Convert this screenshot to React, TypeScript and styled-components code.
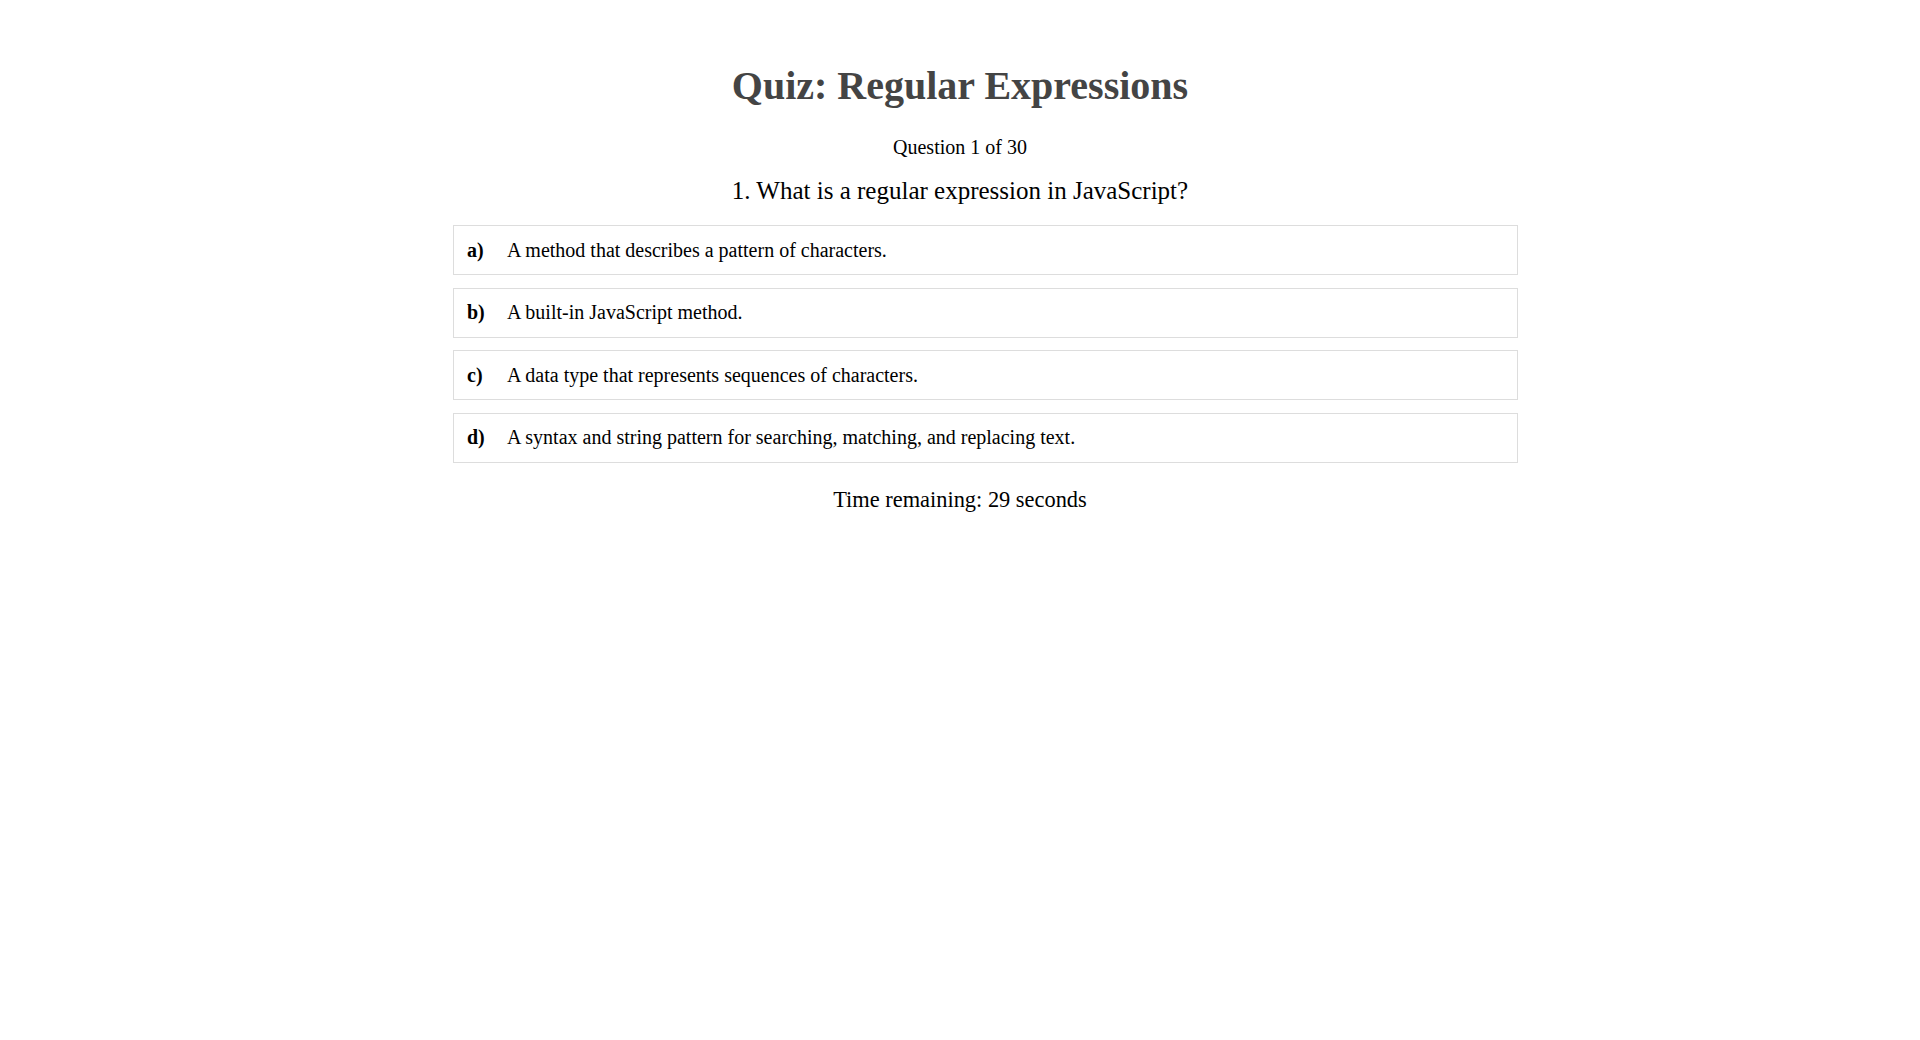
import React from 'react';
import styled, { createGlobalStyle } from 'styled-components';

const GlobalStyle = createGlobalStyle`
  body {
    margin: 8px;
    background: #ffffff;
    font-family: "Liberation Serif", "Times New Roman", serif;
    color: #000000;
  }
`;

const QuizWrapper = styled.main`
  display: flex;
  flex-direction: column;
  align-items: center;
  padding-top: 54px;
`;

const Title = styled.h1`
  margin: 0;
  font-size: 40px;
  font-weight: 700;
  color: #444444;
`;

const Counter = styled.p`
  margin: 27px 0 0;
  font-size: 20px;
`;

const QuestionText = styled.h2`
  margin: 18px 0 20px;
  font-size: 25px;
  font-weight: 400;
`;

const OptionList = styled.ul`
  list-style: none;
  margin: 0;
  padding: 0;
  width: 1065px;
  align-self: flex-start;
  margin-left: calc(50% - 507px);
  display: flex;
  flex-direction: column;
  gap: 12.67px;
`;

const Option = styled.li`
  display: flex;
  align-items: center;
  box-sizing: border-box;
  height: 50px;
  padding: 0 13px;
  border: 1px solid #dddddd;
  font-size: 20px;
  cursor: pointer;
`;

const OptionLetter = styled.span`
  font-weight: 700;
  width: 40px;
  flex-shrink: 0;
`;

const Timer = styled.p`
  margin: 24px 0 0;
  font-size: 22.4px;
`;

const options = [
  { letter: 'a)', text: 'A method that describes a pattern of characters.' },
  { letter: 'b)', text: 'A built-in JavaScript method.' },
  { letter: 'c)', text: 'A data type that represents sequences of characters.' },
  { letter: 'd)', text: 'A syntax and string pattern for searching, matching, and replacing text.' },
];

export default function App() {
  return (
    <>
      <GlobalStyle />
      <QuizWrapper>
        <Title>Quiz: Regular Expressions</Title>
        <Counter>Question 1 of 30</Counter>
        <QuestionText>1. What is a regular expression in JavaScript?</QuestionText>
        <OptionList>
          {options.map((o) => (
            <Option key={o.letter}>
              <OptionLetter>{o.letter}</OptionLetter>
              {o.text}
            </Option>
          ))}
        </OptionList>
        <Timer>Time remaining: 29 seconds</Timer>
      </QuizWrapper>
    </>
  );
}
